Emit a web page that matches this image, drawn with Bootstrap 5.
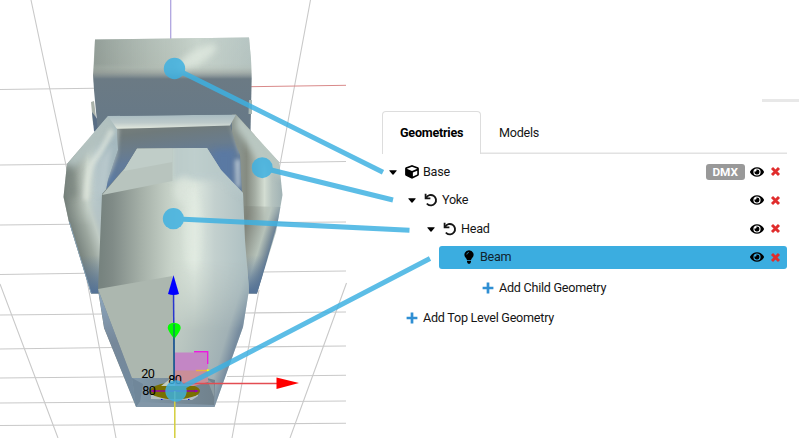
<!DOCTYPE html>
<html lang="en">
<head>
<meta charset="utf-8">
<meta name="viewport" content="width=device-width, initial-scale=1">
<title>Geometries</title>
<link href="https://cdn.jsdelivr.net/npm/bootstrap@5.3.0/dist/css/bootstrap.min.css" rel="stylesheet">
<style>
body{font-family:Roboto,"Liberation Sans",sans-serif;font-size:12.6px;letter-spacing:-.25px;line-height:20px;color:#151515;background:#fff}
.app{width:799px;height:438px}
.scene{width:347px;height:438px;overflow:visible;z-index:2}
.scene text{font-size:12.7px;fill:#000;letter-spacing:0}
.panel{padding:98.5px 12px 0 35px}
.topbar{width:37px;height:3px;margin-right:-12px;background:#e8e8e8}
.tree-tabs{height:43px;margin-top:9.5px;--bs-nav-tabs-border-width:0px;box-shadow:inset 0 -1.5px #e2e2e2}
.tree-tabs .nav-link{color:#151515;padding:0 18px;height:43px;width:99px;border-radius:4px 4px 0 0;border:0;line-height:44px}
.tree-tabs .nav-link.active{border:1.3px solid #ddd;border-bottom:0;font-weight:700;color:#000;background:#fff;padding:0 17px;line-height:42px}
.tree{padding-top:3.5px}
.node{height:28.5px;padding-right:6px}
.node.child{padding-left:19px}
.node.grandchild{padding-left:38px}
.node svg,.adder svg{display:block;flex:none}
.caret{width:8px;height:5px;margin:1px 8px 0 7px}
.kind{width:14px;height:14px;margin-right:4px}
.node.selected{height:23.5px;margin:2.500px 0 4.500px 57px;padding-left:22.500px;background:#3bade0;border-radius:3px;color:#10242e}
.node.selected .kind{margin-right:4.500px}
.eye{width:14px;height:12px;margin-right:6px}
.del{width:11px;height:11px}
.dmx{width:38.5px;height:16px;background:#999;font-size:11.8px;letter-spacing:0;line-height:16.5px;padding:0;border-radius:3px;margin-right:5.500px}
.adder{height:29.5px;padding-left:24px}
.adder.deep{padding-left:100px}
.adder svg{width:12px;height:12px;margin-right:5px}
</style>
<script src="https://cdn.jsdelivr.net/npm/bootstrap@5.3.0/dist/js/bootstrap.bundle.min.js"></script>
</head>
<body class="overflow-hidden">
<svg width="0" height="0" class="position-absolute">
  <symbol id="caret" viewBox="0 0 8 5"><path d="M.6 .3h6.8q.5.2.1.7L4.5 4.4q-.5.5-1 0L.5 1Q.1.5.6.3z"/></symbol>
  <symbol id="cube" viewBox="0 0 512 512"><path d="M239 6 35 83c-19 7-31 25-31 45v222c0 18 10 35 26 43l204 102c14 7 30 7 44 0l204-102c16-8 26-25 26-43V128c0-20-12-38-31-45L273 6c-11-4-23-4-34 0zM256 68l192 72v1l-192 78L64 141v-1zm32 357V275l160-65v135z"/></symbol>
  <symbol id="undo" viewBox="0 0 14 14"><path d="M1.600 .8V5.300H6.400" fill="none" stroke="currentColor" stroke-width="1.800"/><path d="M2.200 4.800A5.200 5.200 0 1 1 3.400 11.100" fill="none" stroke="currentColor" stroke-width="1.900" stroke-linecap="round"/></symbol>
  <symbol id="bulb" viewBox="0 0 14 14"><path d="M7 .2a4.500 4.500 0 0 0-3.500 7.400C4.300 8.600 4.700 9.100 4.900 10h4.200c.2-.9.600-1.400 1.400-2.400A4.500 4.500 0 0 0 7 .2zM5 10.700h4v1.400L8 13.800H6l-1-1.700z"/><path d="M4.800 4.500Q5 2.700 6.900 2.400" fill="none" stroke="#3bade0" stroke-width=".7"/></symbol>
  <symbol id="eye" viewBox="0 0 576 432"><path fill-rule="evenodd" d="M572 200C518 95 411 24 288 24S58 95 4 200a35 35 0 0 0 0 32c54 105 161 176 284 176s230-71 284-176a35 35 0 0 0 0-32zM288 364a148 148 0 1 1 0-296 148 148 0 0 1 0 296zM288 113q-15 0-29 5a53 53 0 0 1-73 73 103 103 0 1 0 102-78z"/></symbol>
  <symbol id="cross" viewBox="0 0 11 11"><path d="M2 2 9 9M9 2 2 9" stroke="#e02d2d" stroke-width="2.900"/></symbol>
  <symbol id="plus" viewBox="0 0 12 12"><path d="M6 .6v10.800M.6 6h10.800" stroke="#2f8fd3" stroke-width="2.700"/></symbol>
</svg>
<main class="app d-flex">
<svg class="scene position-relative flex-shrink-0" viewBox="0 0 347 438">
  <defs>
    <linearGradient id="boxV" x1="0" y1="38" x2="0" y2="120" gradientUnits="userSpaceOnUse"><stop offset="0" stop-color="#b7c3bd"/><stop offset=".36" stop-color="#b0bab2"/><stop offset=".42" stop-color="#9ba39f"/><stop offset=".5" stop-color="#6b7a84"/><stop offset="1" stop-color="#677987"/></linearGradient>
    <linearGradient id="boxH" x1="93" y1="0" x2="251" y2="0" gradientUnits="userSpaceOnUse"><stop offset="0" stop-color="#7f8a84" stop-opacity=".65"/><stop offset=".45" stop-color="#b9c5bc" stop-opacity=".5"/><stop offset=".66" stop-color="#ccd8d0" stop-opacity=".8"/><stop offset="1" stop-color="#b6c6c5" stop-opacity=".7"/></linearGradient>
    <linearGradient id="fadeV" x1="0" y1="38" x2="0" y2="79" gradientUnits="userSpaceOnUse"><stop offset="0" stop-color="#fff"/><stop offset=".62" stop-color="#fff"/><stop offset="1" stop-color="#000"/></linearGradient>
    <mask id="fade"><rect width="347" height="438" fill="url(#fadeV)"/></mask>
    <linearGradient id="armL" x1="64" y1="0" x2="108" y2="0" gradientUnits="userSpaceOnUse"><stop offset="0" stop-color="#6f7a75"/><stop offset=".25" stop-color="#939d95"/><stop offset=".53" stop-color="#c9d4cb"/><stop offset=".72" stop-color="#b9c9cb"/><stop offset="1" stop-color="#a5b9bf"/></linearGradient>
    <linearGradient id="armLow" x1="69" y1="238" x2="101" y2="228" gradientUnits="userSpaceOnUse"><stop offset="0" stop-color="#718796"/><stop offset=".15" stop-color="#77827d"/><stop offset=".55" stop-color="#9ca79f"/><stop offset=".85" stop-color="#c0cbc4"/><stop offset="1" stop-color="#b5c3c4"/></linearGradient>
    <linearGradient id="lowStart" x1="0" y1="192" x2="0" y2="225" gradientUnits="userSpaceOnUse"><stop offset="0" stop-color="#000"/><stop offset="1" stop-color="#fff"/></linearGradient>
    <mask id="lowStartMask"><rect width="347" height="438" fill="url(#lowStart)"/></mask>
    <linearGradient id="armR" x1="240" y1="0" x2="283" y2="0" gradientUnits="userSpaceOnUse"><stop offset="0" stop-color="#8a938c"/><stop offset=".15" stop-color="#858b81"/><stop offset=".35" stop-color="#a5aea4"/><stop offset=".57" stop-color="#d3ddd2"/><stop offset=".75" stop-color="#b5c3bf"/><stop offset="1" stop-color="#9fb1b4"/></linearGradient>
    <linearGradient id="armRL" x1="244" y1="228" x2="276" y2="238" gradientUnits="userSpaceOnUse"><stop offset="0" stop-color="#7e8279"/><stop offset=".6" stop-color="#b6c2b9"/><stop offset=".82" stop-color="#80929c"/><stop offset="1" stop-color="#536f91"/></linearGradient>
    <linearGradient id="blueLow" x1="0" y1="255" x2="0" y2="292" gradientUnits="userSpaceOnUse"><stop offset="0" stop-color="#5b7899" stop-opacity="0"/><stop offset="1" stop-color="#557397"/></linearGradient>
    <linearGradient id="bridge" x1="0" y1="115" x2="0" y2="129" gradientUnits="userSpaceOnUse"><stop offset="0" stop-color="#a9bcc2"/><stop offset=".55" stop-color="#bdcaca"/><stop offset=".9" stop-color="#dce3da"/><stop offset="1" stop-color="#c6cdc3"/></linearGradient>
    <linearGradient id="inside" x1="0" y1="126" x2="6" y2="178" gradientUnits="userSpaceOnUse"><stop offset="0" stop-color="#a3aaa2"/><stop offset=".2" stop-color="#7a817c"/><stop offset=".45" stop-color="#6f7a7b"/><stop offset=".75" stop-color="#6a7c8b"/><stop offset="1" stop-color="#627b9a"/></linearGradient>
    <linearGradient id="body" x1="101" y1="0" x2="245" y2="0" gradientUnits="userSpaceOnUse"><stop offset="0" stop-color="#77837f"/><stop offset=".08" stop-color="#808b87"/><stop offset=".28" stop-color="#a5b0a8"/><stop offset=".5" stop-color="#cad5cb"/><stop offset=".65" stop-color="#dee8df"/><stop offset=".79" stop-color="#c3d0ce"/><stop offset="1" stop-color="#afc1c3"/></linearGradient>
    <linearGradient id="lower" x1="170" y1="310" x2="239" y2="331" gradientUnits="userSpaceOnUse"><stop offset="0" stop-color="#c4cfc7"/><stop offset=".35" stop-color="#b7c4bf"/><stop offset=".85" stop-color="#a1b1b5"/><stop offset="1" stop-color="#778c9f"/></linearGradient>
    <linearGradient id="lowFade" x1="0" y1="260" x2="0" y2="330" gradientUnits="userSpaceOnUse"><stop offset="0" stop-color="#000"/><stop offset="1" stop-color="#fff"/></linearGradient>
    <mask id="lowMask"><rect width="347" height="438" fill="url(#lowFade)"/></mask>
    <linearGradient id="base" x1="136" y1="0" x2="216" y2="0" gradientUnits="userSpaceOnUse"><stop offset="0" stop-color="#8098aa"/><stop offset=".3" stop-color="#7b909f"/><stop offset="1" stop-color="#70818c"/></linearGradient>
    <linearGradient id="slope" x1="0" y1="290" x2="0" y2="407" gradientUnits="userSpaceOnUse"><stop offset="0" stop-color="#8ea8c0"/><stop offset=".45" stop-color="#76889a"/><stop offset="1" stop-color="#718ba0"/></linearGradient>
    <filter id="soft" filterUnits="userSpaceOnUse" x="0" y="0" width="347" height="438" color-interpolation-filters="sRGB"><feGaussianBlur stdDeviation="3"/></filter>
    <filter id="soft2" filterUnits="userSpaceOnUse" x="0" y="0" width="347" height="438" color-interpolation-filters="sRGB"><feGaussianBlur stdDeviation="2"/></filter>
    <clipPath id="boxClip"><path d="M95 39.500 249 37.500 251 60 251.700 78 250.500 133H98L94 90 93 75z"/></clipPath>
    <clipPath id="headClip"><path d="M137 148.500 207 148 221 170 243 193 245 240 249 290 243 327 214.500 407H136L104 328 98 290 102 194 125 168z"/></clipPath>
    <clipPath id="yokeClip"><path d="M108 116 236 114.500 279 162 282.500 195 276 232 257 293.500H91L69 222 63.500 197 67 164z"/></clipPath>
    <clipPath id="openClip"><path d="M117 128 230 125 236 145 240 155 242 195H105L108 180 118 150z"/></clipPath>
  </defs>

  <!-- floor grid -->
  <g fill="none" stroke="#c9c9c9" stroke-width="1.100">
    <path d="M31 0 67 170M86 275 116 438M0 284 58 438M310.500 0 279 170M259 290 232 438M346.500 283 290 438"/>
    <path d="M0 89.500 95 88.300M0 165 68 164.300M0 225 72 224.300M0 274.500 86 273.300M0 315 104 314M0 349 114 347.500M0 378 132 376.800M0 403 137 402M0 425.500 346 423.300M279 162.500 346 161.500M275 222.500 346 222M262 272 346 271M245 313 346 312M236 347 346 346M227 376.500 346 375.300M215 402 346 401"/>
  </g>
  <path d="M250 86.700 346 85.300" stroke="#d98a8a"/>
  <path d="M170.700 0V39" stroke="#b0a5e0" stroke-width="1.300"/>

  <!-- base -->
  <path d="M91 102 94 101 98 133 93 124z" fill="#aab2aa"/>
  <path d="M92 112 98 120 98 135 94 131z" fill="#586d84"/>
  <path d="M95 39.500 249 37.500 251 60 251.700 78 250.500 133H98L94 90 93 75z" fill="url(#boxV)"/>
  <path d="M95 39.500 249 37.500 251 60 251.700 80H93.300z" fill="url(#boxH)" mask="url(#fade)"/>
  <g clip-path="url(#boxClip)"><ellipse cx="197" cy="57" rx="22" ry="7" transform="rotate(-30 197 57)" fill="#e3ece2" opacity=".7" filter="url(#soft)"/></g>
  <path d="M249 100H252V114H248.500z" fill="#a8b6b2"/>

  <!-- yoke -->
  <g clip-path="url(#yokeClip)">
    <path d="M60 110H120V295H60z" fill="url(#armL)"/>
    <path d="M60 192H103V295H60z" fill="url(#armLow)" mask="url(#lowStartMask)"/>
    <path d="M108 112 60 166 72 170Q92 150 118 130z" fill="#b2c1bf" filter="url(#soft)"/>
    <path d="M65 166 72 163 76 196 64 198z" fill="#7c8781" filter="url(#soft)" opacity=".8"/>
    <path d="M112 130Q102 152 92 163 87 175 86 200" fill="none" stroke="#e3eae0" stroke-width="5" opacity=".75" filter="url(#soft2)"/>
    <path d="M101 160 112 145 106 192 97 196z" fill="#b7c7cb" filter="url(#soft2)"/>
    <path d="M232 110H290V295H232z" fill="url(#armR)"/>
    <path d="M236 110 285 160 283 180 258 160 236 128z" fill="#b9c7c1" filter="url(#soft)"/>
    <path d="M244 206 282 207 257 296H246z" fill="url(#armRL)" mask="url(#lowStartMask)"/>
    <path d="M246 245H273L257 294H249zM74 245H100L99 295H91z" fill="url(#blueLow)"/>
    <g clip-path="url(#openClip)">
      <path d="M100 120H250V200H100z" fill="url(#inside)"/>
      <path d="M214 150H234V192H228L214 165z" fill="#5478ab" filter="url(#soft)" opacity=".55"/>
      <path d="M111 126 119 128 117 155 108 182 102 180z" fill="#a9b6b5" filter="url(#soft2)"/>
      <path d="M109 178 116 170 112 188 106 192z" fill="#577aa6" filter="url(#soft2)" opacity=".8"/>
      <path d="M235 160 240 159 240 188 236 186z" fill="#b6c5d2" filter="url(#soft2)"/>
      <path d="M229 122 240 156 243 148z" fill="#a9b1a8" filter="url(#soft2)"/>
    </g>
    <path d="M108 116 236 114.500 230 125.500 117 129z" fill="url(#bridge)"/>
    <path d="M69 222 91 294" stroke="#8ba9c1" stroke-width="1.500"/>
  </g>

  <!-- head -->
  <g clip-path="url(#headClip)">
    <path d="M90 140H260V410H90z" fill="url(#body)"/>
    <path d="M172 140H250V202L220 180 172 181z" fill="#b7c8c9" opacity=".8" filter="url(#soft)"/>
    <ellipse cx="184" cy="190" rx="10" ry="14" fill="#dfe8df" opacity=".6" filter="url(#soft)"/>
    <ellipse cx="193" cy="232" rx="9" ry="42" fill="#e5eee4" opacity=".4" filter="url(#soft)"/>
    <path d="M172 250H252V410H172z" fill="url(#lower)" mask="url(#lowMask)"/>
    <path d="M137 148.500H172.500V181L102 195 125 168z" fill="#b8c4be"/>
    <path d="M137 148.500H172.500V162L124 171 125 168z" fill="#c0cdc8"/>
    <path d="M98 289 172.500 276 174.500 379H132z" fill="#acb7af"/>
    <path d="M98 289 132 378 143 382 136 407 104 328z" fill="url(#slope)"/>
    <path d="M132 378H207L215 380 214 407H136z" fill="url(#base)"/>
    <path d="M132 378 143 384 140 402 136 407z" fill="#70879a"/>
    <path d="M140 402 214 405V407H136z" fill="#8297a8"/>
    <path d="M207 379 214 384 214 397z" fill="#8c9ca2"/>
  </g>

  <!-- emitter and gizmo -->
  <path d="M151 393 198 392 198 396 192 400 151 399z" fill="#b6bfc0"/>
  <ellipse cx="175" cy="391" rx="25" ry="8.300" fill="#796f00"/>
  <path d="M161 386 170 379H180L188 386z" fill="#c2cbbe"/>
  <path d="M175 352.500H208V371H175z" fill="#c386c5"/>
  <path d="M175 370.500H208V382L194 386H175z" fill="#ca8e98"/>
  <path d="M194 351.800H207.700V364" fill="none" stroke="#ed19df" stroke-width="1.400"/>
  <path d="M196 370.500H210" stroke="#e8b43f" stroke-width="1.400"/><path d="M207 369 211 370.500 207 372z" fill="#ff0"/>
  <path d="M152 391H197" stroke="#9600a0" stroke-width="1.300"/>
  <path d="M150 391 154 389.500V392.500zM199 391 195 389.500V392.500z" fill="#9600b0"/>
  <path d="M161 399.500h1.500M188 399.500h1.500" stroke="#00f" stroke-width="1.200"/>
  <path d="M174.800 391V438" stroke="#d4ce3c" stroke-width="1.500"/>
  <path d="M175 383.500H278" stroke="#e34d52" stroke-width="1.300"/>
  <path d="M276.500 377.500 299 383 276.500 389z" fill="#f00"/>
  <path d="M173.500 292 174.300 382" stroke="#2835ce" stroke-width="1.500"/>
  <path d="M173.500 275.300 179 294Q173.500 296 168 294z" fill="#00f"/>
  <path d="M167.700 328Q167.700 323 174 322.800 180.700 323 180.700 328 180.500 331 174.300 339 168 331 167.700 328z" fill="#0f0"/>
  <path d="M174 324V382" stroke="#1c6b76" stroke-width="1.200"/>
  <text x="141.300" y="378" textLength="13.500">20</text>
  <text x="142.300" y="394.500" textLength="13.500">80</text>
  <text x="168.300" y="384" textLength="13.500">80</text>

  <!-- callouts -->
  <g stroke="#3db1e2" stroke-width="5" opacity=".84">
    <path d="M174.500 68.500 383 172.300M262 167.700 393 200M173.500 218.700 409.500 230.200M175 391 430 258.500"/>
    <g stroke="none" fill="#3db1e2"><circle cx="174.500" cy="68.500" r="10.700"/><circle cx="262.200" cy="167.700" r="10.500"/><circle cx="173.400" cy="218.700" r="10.600"/><circle cx="176" cy="391" r="10.700"/></g>
  </g>
</svg>

<section class="panel flex-grow-1">
  <div class="topbar ms-auto"></div>
  <ul class="nav nav-tabs tree-tabs flex-nowrap">
    <li class="nav-item"><a class="nav-link active" href="#">Geometries</a></li>
    <li class="nav-item"><a class="nav-link" href="#">Models</a></li>
  </ul>
  <div class="tree">
    <div class="node d-flex align-items-center">
      <svg class="caret"><use href="#caret"/></svg><svg class="kind"><use href="#cube"/></svg><span>Base</span>
      <span class="badge dmx ms-auto">DMX</span><svg class="eye"><use href="#eye"/></svg><svg class="del"><use href="#cross"/></svg>
    </div>
    <div class="node child d-flex align-items-center">
      <svg class="caret"><use href="#caret"/></svg><svg class="kind"><use href="#undo"/></svg><span>Yoke</span>
      <svg class="eye ms-auto"><use href="#eye"/></svg><svg class="del"><use href="#cross"/></svg>
    </div>
    <div class="node grandchild d-flex align-items-center">
      <svg class="caret"><use href="#caret"/></svg><svg class="kind"><use href="#undo"/></svg><span>Head</span>
      <svg class="eye ms-auto"><use href="#eye"/></svg><svg class="del"><use href="#cross"/></svg>
    </div>
    <div class="node selected d-flex align-items-center">
      <svg class="kind"><use href="#bulb"/></svg><span>Beam</span>
      <svg class="eye ms-auto"><use href="#eye"/></svg><svg class="del"><use href="#cross"/></svg>
    </div>
    <div class="adder deep d-flex align-items-center"><svg><use href="#plus"/></svg><span>Add Child Geometry</span></div>
    <div class="adder d-flex align-items-center"><svg><use href="#plus"/></svg><span>Add Top Level Geometry</span></div>
  </div>
</section>
</main>
</body>
</html>
